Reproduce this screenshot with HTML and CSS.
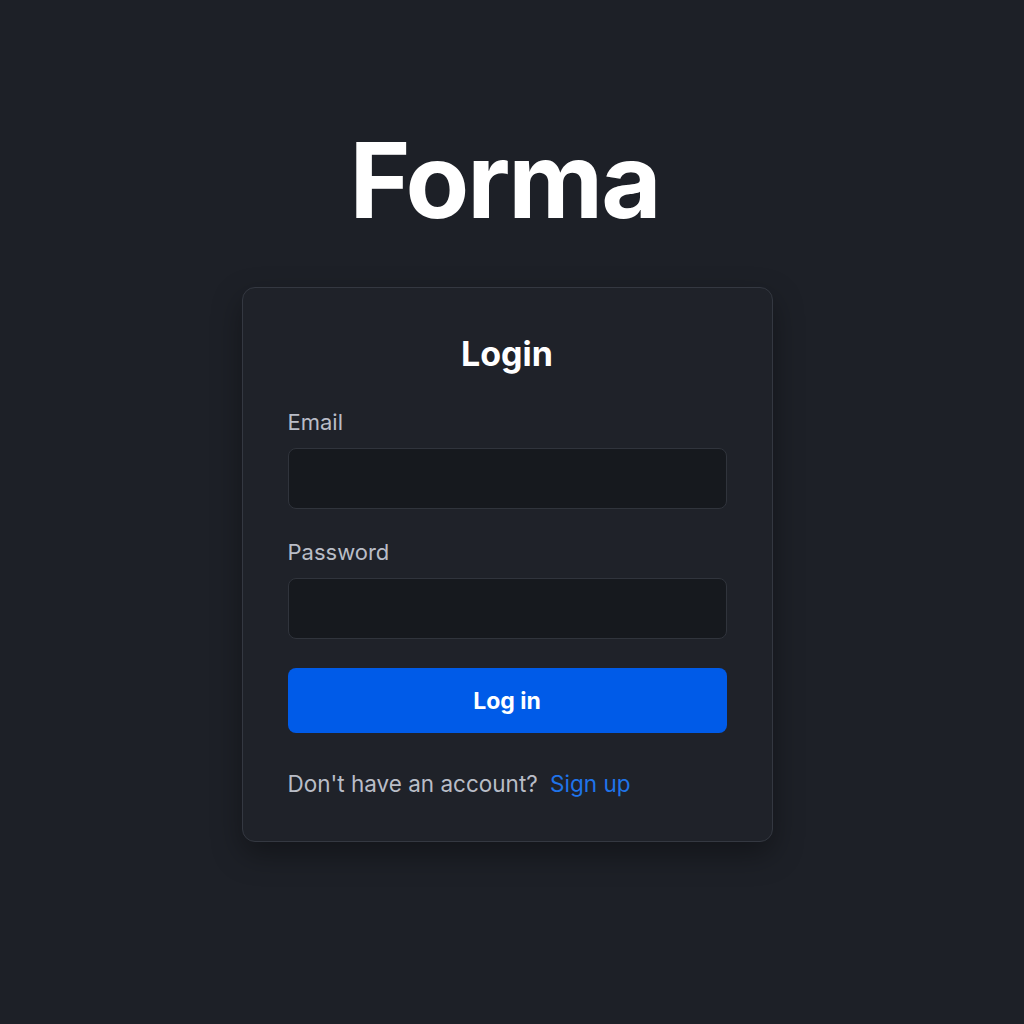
FILE: index.html
```html
<!DOCTYPE html>
<html lang="en">
<head>
<meta charset="utf-8">
<title>Forma</title>
<link rel="stylesheet" href="styles.css">
</head>
<body>
<main class="page">
  <h1 class="brand">Forma</h1>
  <section class="card">
    <h2 class="card-title">Login</h2>
    <form class="form">
      <div class="field">
        <label class="label" for="email">Email</label>
        <input class="input" id="email" type="email">
      </div>
      <div class="field">
        <label class="label" for="password">Password</label>
        <input class="input" id="password" type="password">
      </div>
      <button class="btn" type="button">Log in</button>
    </form>
    <p class="footer">Don't have an account? <a class="link" href="#">Sign up</a></p>
  </section>
</main>
</body>
</html>
```

FILE: styles.css
```css
* { box-sizing: border-box; }
html, body { margin: 0; padding: 0; }
body {
  background: #1d2027;
  font-family: Inter, "Noto Sans", sans-serif;
  color: #fff;
  min-height: 1024px;
}
.page {
  display: flex;
  flex-direction: column;
  align-items: center;
  padding-top: 128px;
  padding-right: 10px;
}
.brand {
  margin: 0 5px 0 0;
  font-size: 104px;
  line-height: 1;
  font-weight: 700;
  letter-spacing: -2px;
  color: #fff;
}
.card {
  margin-top: 55px;
  width: 531px;
  background: #1f2229;
  border: 1px solid #343841;
  border-radius: 13px;
  padding: 46px 45px 43px;
  box-shadow: 0 12px 30px rgba(0,0,0,0.35);
}
.card-title {
  margin: 0;
  text-align: center;
  font-size: 34px;
  line-height: 40px;
  font-weight: 700;
  color: #fff;
}
.form {
  display: flex;
  flex-direction: column;
  margin-top: 34px;
}
.field {
  display: flex;
  flex-direction: column;
  margin-bottom: 29px;
}
.label {
  font-size: 22px;
  line-height: 28px;
  color: #b9bdc7;
  margin-bottom: 12px;
}
.input {
  height: 61px;
  width: 100%;
  background: #16191e;
  border: 1px solid #30343c;
  border-radius: 8px;
  color: #fff;
  font: inherit;
  padding: 0 16px;
}
.btn {
  height: 65px;
  width: 100%;
  border: none;
  border-radius: 8px;
  background: #005be8;
  color: #fff;
  font-family: inherit;
  font-size: 23px;
  font-weight: 700;
}
.footer {
  margin: 37px 0 0;
  font-size: 22.5px;
  line-height: 28px;
  color: #b9bdc7;
}
.link {
  color: #1f74ea;
  text-decoration: none;
  margin-left: 6px;
}
```
